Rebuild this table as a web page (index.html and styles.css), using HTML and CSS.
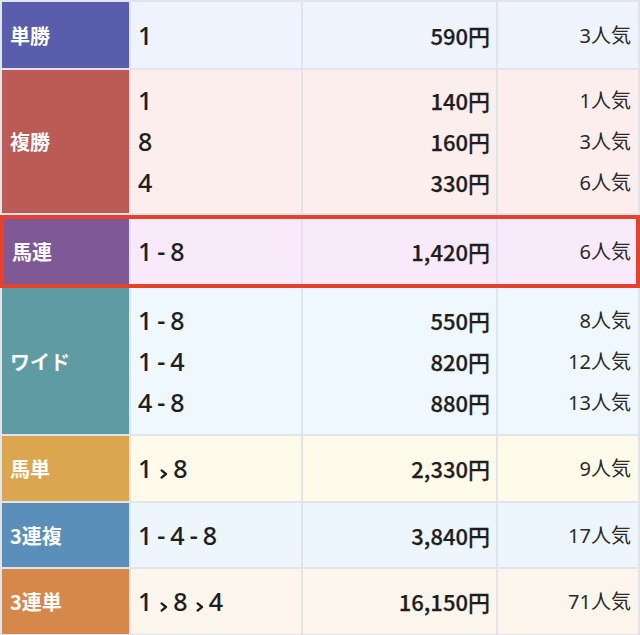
FILE: index.html
```html
<!DOCTYPE html>
<html lang="ja">
<head>
<meta charset="utf-8">
<link rel="stylesheet" href="styles.css">
</head>
<body>
<div class="board">
  <div class="row tan">
    <div class="label">単勝</div>
    <div class="cell combo"><span>1</span></div>
    <div class="cell price"><span>590円</span></div>
    <div class="cell pop"><span>3人気</span></div>
  </div>
  <div class="row fuku">
    <div class="label">複勝</div>
    <div class="cell combo"><span>1</span><span>8</span><span>4</span></div>
    <div class="cell price"><span>140円</span><span>160円</span><span>330円</span></div>
    <div class="cell pop"><span>1人気</span><span>3人気</span><span>6人気</span></div>
  </div>
  <div class="row umaren hl">
    <div class="label">馬連</div>
    <div class="cell combo"><span>1<i class="dash">-</i>8</span></div>
    <div class="cell price"><span>1,420円</span></div>
    <div class="cell pop"><span>6人気</span></div>
  </div>
  <div class="row wide">
    <div class="label">ワイド</div>
    <div class="cell combo"><span>1<i class="dash">-</i>8</span><span>1<i class="dash">-</i>4</span><span>4<i class="dash">-</i>8</span></div>
    <div class="cell price"><span>550円</span><span>820円</span><span>880円</span></div>
    <div class="cell pop"><span>8人気</span><span>12人気</span><span>13人気</span></div>
  </div>
  <div class="row umatan">
    <div class="label">馬単</div>
    <div class="cell combo"><span>1<svg class="arr" viewBox="0 0 8 10"><path d="M1.6 1.4 L6 5 L1.6 8.6"/></svg>8</span></div>
    <div class="cell price"><span>2,330円</span></div>
    <div class="cell pop"><span>9人気</span></div>
  </div>
  <div class="row sanfuku">
    <div class="label">3連複</div>
    <div class="cell combo"><span>1<i class="dash">-</i>4<i class="dash">-</i>8</span></div>
    <div class="cell price"><span>3,840円</span></div>
    <div class="cell pop"><span>17人気</span></div>
  </div>
  <div class="row santan">
    <div class="label">3連単</div>
    <div class="cell combo"><span>1<svg class="arr" viewBox="0 0 8 10"><path d="M1.6 1.4 L6 5 L1.6 8.6"/></svg>8<svg class="arr" viewBox="0 0 8 10"><path d="M1.6 1.4 L6 5 L1.6 8.6"/></svg>4</span></div>
    <div class="cell price"><span>16,150円</span></div>
    <div class="cell pop"><span>71人気</span></div>
  </div>
</div>
</body>
</html>
```
FILE: styles.css
```css
* { box-sizing: border-box; }
body {
  margin: 0;
  background: #ffffff;
  font-family: "Noto Sans", "Noto Sans CJK JP", sans-serif;
  color: #1e1e1e;
}
.board {
  width: 640px;
  background: #e1e4ea;
  padding: 2px;
  display: grid;
  grid-template-rows: 66px 143px auto 146px 65px 64px 65px;
  row-gap: 2px;
}
.row {
  display: grid;
  grid-template-columns: 127px 170px 193px 1fr;
  column-gap: 2px;
}
.row.hl {
  margin: 0 -2px -2px;
  border: 4px solid #e6412b;
  grid-template-columns: 125px 170px 193px 1fr;
}
.label {
  display: flex;
  align-items: center;
  padding-left: 8px;
  color: #ffffff;
  font-family: "Noto Sans CJK JP", sans-serif;
  font-weight: 700;
  font-size: 20px;
}
.cell {
  display: flex;
  flex-direction: column;
  justify-content: center;
  line-height: 41px;
}
.hl .cell { padding-top: 12px; padding-bottom: 12px; }
.combo {
  padding-left: 7px;
  font-size: 25px;
  font-weight: 500;
  -webkit-text-stroke: 0.1px #1e1e1e;
}
.price {
  align-items: flex-end;
  padding-right: 6px;
  font-family: "Noto Sans CJK JP", sans-serif;
  font-size: 22px;
  font-weight: 500;
  -webkit-text-stroke: 0.25px #1e1e1e;
}
.pop {
  align-items: flex-end;
  padding-right: 7px;
  font-size: 20px;
  font-weight: 400;
  color: #2a2a2a;
}
.hl .pop { padding-right: 5px; }
.dash {
  font-style: normal;
  margin: 0 5px;
}
.arr {
  width: 8px;
  height: 10px;
  margin: 0 5px 0 8px;
  vertical-align: -1px;
  fill: none;
  stroke: #1e1e1e;
  stroke-width: 2.3;
  stroke-linecap: round;
  stroke-linejoin: round;
}

.tan .label { background: #5a5dab; }
.tan .cell { background: #eef3fe; }
.fuku .label { background: #bc5a55; }
.fuku .cell { background: #fdeeee; }
.umaren .label { background: #7f5896; }
.umaren .cell { background: #f8eafb; }
.wide .label { background: #5e9ba2; }
.wide .cell { background: #eef8fe; }
.umatan .label { background: #dca64e; }
.umatan .cell { background: #fefbea; }
.sanfuku .label { background: #5a8fb9; }
.sanfuku .cell { background: #edf5fd; }
.santan .label { background: #d6884b; }
.santan .cell { background: #fcf5ec; }
```
